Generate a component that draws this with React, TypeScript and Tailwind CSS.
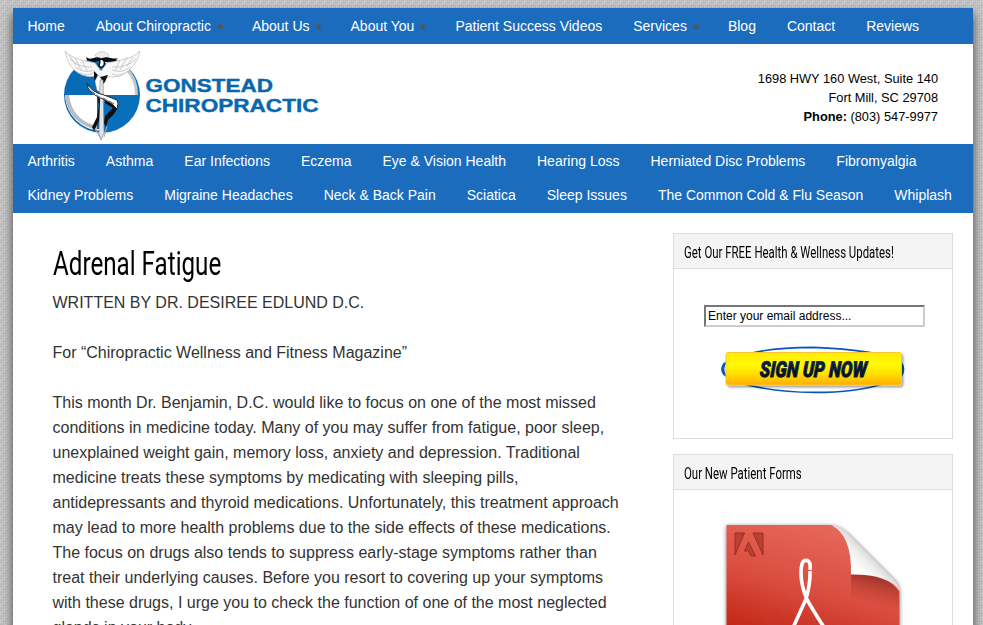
import React from "react";

type NavItem = { label: string; sub?: boolean };

const mainNav: NavItem[] = [
  { label: "Home" },
  { label: "About Chiropractic", sub: true },
  { label: "About Us", sub: true },
  { label: "About You", sub: true },
  { label: "Patient Success Videos" },
  { label: "Services", sub: true },
  { label: "Blog" },
  { label: "Contact" },
  { label: "Reviews" },
];

const topics: string[][] = [
  ["Arthritis", "Asthma", "Ear Infections", "Eczema", "Eye & Vision Health", "Hearing Loss", "Herniated Disc Problems", "Fibromyalgia"],
  ["Kidney Problems", "Migraine Headaches", "Neck & Back Pain", "Sciatica", "Sleep Issues", "The Common Cold & Flu Season", "Whiplash"],
];

const lines = [
  "This month Dr. Benjamin, D.C. would like to focus on one of the most missed",
  "conditions in medicine today. Many of you may suffer from fatigue, poor sleep,",
  "unexplained weight gain, memory loss, anxiety and depression. Traditional",
  "medicine treats these symptoms by medicating with sleeping pills,",
  "antidepressants and thyroid medications. Unfortunately, this treatment approach",
  "may lead to more health problems due to the side effects of these medications.",
  "The focus on drugs also tends to suppress early-stage symptoms rather than",
  "treat their underlying causes. Before you resort to covering up your symptoms",
  "with these drugs, I urge you to check the function of one of the most neglected",
  "glands in your body.",
];

function Texture() {
  return (
    <svg className="absolute inset-0 h-full w-full" aria-hidden="true" shapeRendering="crispEdges">
      <defs>
        <pattern id="weave" width="8" height="8" patternUnits="userSpaceOnUse">
          <rect width="8" height="8" fill="#c9c9c9" />
          <path d="M0 0h4v1H0zM0 2h3v1H0zM5 1h1v4H5zM7 0h1v4H7zM1 4h1v4H1zM3 4h1v4H3zM4 5h4v1H4zM5 7h3v1H5z" fill="#bababa" />
        </pattern>
      </defs>
      <rect width="100%" height="100%" fill="url(#weave)" />
    </svg>
  );
}

function Logo() {
  return (
    <svg width="270" height="100" viewBox="50 44 270 100" className="block" role="img">
      <defs>
        <linearGradient id="rim" x1="0" y1="0" x2="1" y2="1">
          <stop offset="0" stopColor="#0868b2" />
          <stop offset="1" stopColor="#0872bd" />
        </linearGradient>
      </defs>
      <circle cx="102" cy="95" r="38" fill="url(#rim)" />
      <path d="M102 62a33 33 0 0 1 35 33h-35z" fill="#fff" />
      <path d="M128 68q10 10 10 27h-3q0-15-9-24z" fill="#c6c7cb" />
      <path d="M65 95h37v36a37 37 0 0 1-37-36z" fill="#fff" />
      <path d="M65 95h4q3 25 28 31v4Q68 123 65 95z" fill="#babcc2" />
      <path d="M98 63h8v12h-8zM97 92h5v37h-5z" fill="#0869b1" />
      <path d="M65 51q5 6 17 9l13 3 6 8 6-8 14-3q12-2 19-9-3 17-20 25-10 2-15 0l-3 4-5-4q-8 2-15-1Q68 69 65 51z" fill="#f8f8f8" stroke="#b3b3b3" strokeWidth=".6" />
      <path d="M70 59q9 9 22 8m-17 0q9 7 19 3m-14 3q8 4 14-1m42-13q-9 9-24 8m18 0q-8 7-18 3m13 3q-6 4-13 1M69 55l7 10m-1-7 6 12m1-10 5 11m46-14-6 9m0-9-7 13m0-10-5 11" stroke="#b5b5b5" strokeWidth=".65" fill="none" />
      <path d="M95 55q7-7 14 0l-2 3h-10z" fill="#eee" stroke="#aaa" strokeWidth=".5" />
      <path d="M86 57q3 3 8 1 5-2 7 1 4-3 9-1 5 1 8 0l-3 3-9 1-5-2-6 2-8-2z" fill="#080808" />
      <path d="M99 59q7 0 5 6-2 4-5 1l1-5z" fill="#fff" stroke="#0a0a0a" strokeWidth="1.4" />
      <path d="m94 71 6 6 8-2-3 7-4 4 1 4-5-4-3-8z" fill="#111" />
      <path d="M98 75q5 4 5 12l-1 7-5-4-2-9z" fill="#fff" stroke="#aaa" strokeWidth=".4" />
      <path d="M100 80h3l1 53-3 7-2-7z" fill="#e4e4e4" stroke="#85888d" strokeWidth=".65" />
      <path d="m97 95 2 11-2 11-5 10 2 4 5-10 1-22zM105 99l9 5 4 4q-4 7-10 12l-2 7-2-4 1-7 8-8-8-5z" fill="#101010" />
      <path d="M87 83q4 9 17 12l13 5q2 3 0 9-4-6-14-10-16-6-16-16z" fill="#fff" stroke="#282828" strokeWidth="1" />
      <path d="m91 91 4 3m1 1 5 3m2 0 5 3m1 0 5 3" stroke="#777" strokeWidth="1.1" />
      <path d="M95 128q4 8 6 11M107 126l-3 11" stroke="#aaa" strokeWidth="1" />
      <g strokeWidth=".4" className="fill-[#0868ad] stroke-[#0868ad] font-['Liberation_Sans',Arial,sans-serif] text-[18.6px] font-bold">
        <text x="145.5" y="92" textLength="127.5" lengthAdjust="spacingAndGlyphs">GONSTEAD</text>
        <text x="145.5" y="111.5" textLength="173" lengthAdjust="spacingAndGlyphs">CHIROPRACTIC</text>
      </g>
    </svg>
  );
}

function SignUpButton() {
  return (
    <svg width="190" height="52" viewBox="718 344 190 52" className="block" role="img">
      <defs>
        <linearGradient id="gold" x1="0" y1="0" x2="0" y2="1">
          <stop offset="0" stopColor="#fff000" />
          <stop offset=".4" stopColor="#fff800" />
          <stop offset=".65" stopColor="#ffdf00" />
          <stop offset="1" stopColor="#ffae00" />
        </linearGradient>
        <linearGradient id="ink" x1="0" y1="0" x2="0" y2="1">
          <stop offset="0" stopColor="#06285c" />
          <stop offset="1" stopColor="#030616" />
        </linearGradient>
        <filter id="lift" x="-10%" y="-20%" width="120%" height="160%">
          <feDropShadow dx="1.5" dy="2" stdDeviation="1.2" floodOpacity=".35" />
        </filter>
      </defs>
      <path d="M813 347.4q-42 0-66 7-25 6-25 15t27 16q31 7 65 7 43 0 70-9 19-6 18-15-1-10-33-16-25-4-56-5" fill="none" stroke="#0757b8" strokeWidth="1.6" />
      <path d="M725 363q-4 6 0 12M901 363q4 6 0 13" fill="none" stroke="#0757b8" strokeWidth="2.6" />
      <rect x="726" y="352.5" width="175.5" height="32.5" rx="2" fill="url(#gold)" stroke="#ffc430" filter="url(#lift)" />
      <text transform="translate(759.5 377) skewX(-3)" textLength="107" lengthAdjust="spacingAndGlyphs" fill="url(#ink)" stroke="#071734" strokeWidth=".8" className="font-[Roboto,sans-serif] text-[22px] font-black italic">SIGN UP NOW</text>
    </svg>
  );
}

function PdfIcon() {
  return (
    <svg width="200" height="115" viewBox="713 510 200 115" className="block" role="img">
      <defs>
        <linearGradient id="red" gradientUnits="userSpaceOnUse" x1="795" y1="524" x2="760" y2="650">
          <stop offset="0" stopColor="#e56557" />
          <stop offset=".45" stopColor="#da4e40" />
          <stop offset="1" stopColor="#bd1d0c" />
        </linearGradient>
        <linearGradient id="curl" gradientUnits="userSpaceOnUse" x1="853" y1="571" x2="874" y2="550">
          <stop offset=".15" stopColor="#fff" />
          <stop offset=".55" stopColor="#eee" />
          <stop offset=".85" stopColor="#d2d2d2" />
          <stop offset="1" stopColor="#eee" />
        </linearGradient>
        <linearGradient id="fold" gradientUnits="userSpaceOnUse" x1="872" y1="573" x2="864" y2="604">
          <stop offset="0" stopColor="#7b2019" stopOpacity=".75" />
          <stop offset="1" stopColor="#c03527" stopOpacity="0" />
        </linearGradient>
        <filter id="paper" x="-10%" y="-10%" width="120%" height="120%">
          <feDropShadow dx="0" dy="1" stdDeviation="2" floodOpacity=".55" />
        </filter>
      </defs>
      <path d="M726.5 525H831Q841 526 849 534L894 579Q899.5 584 899.5 592V640h-173z" fill="url(#red)" filter="url(#paper)" />
      <path d="M851 574Q888 574 899 592V610H851z" fill="url(#fold)" />
      <path d="M831 525Q842 526 849 534L894 579Q899 584 899.5 591 889 574 851 574.5 852 535 831 525z" fill="url(#curl)" />
      <path d="M735 533h9.5l-9.5 22zM753 533h10v22zM748.5 542l7 14h-4.5l-2.5-5h-4z" fill="#b94032" stroke="#942b23" strokeWidth=".9" />
      <path d="M810 570q1.200-9.500-4-9.800c-4-.2-5 6-5 13 0 9 2.500 17.500 5.500 25.500 6 11 11 18 19 31M810 571q.5 12-4 28l-14 31" fill="none" stroke="#fff" strokeWidth="3.6" />
    </svg>
  );
}

function Widget({ title, className, children }: { title: string; className: string; children: React.ReactNode }) {
  return (
    <section className={`w-[280px] border border-[#ddd] bg-white ${className}`}>
      <h4 className="h-[35px] border-b border-[#ddd] bg-[#f4f4f4] pl-[9.5px] font-[Roboto,sans-serif] text-[17.2px] leading-[37px] text-black">
        <span className="inline-block origin-left scale-x-[0.664] whitespace-nowrap">{title}</span>
      </h4>
      {children}
    </section>
  );
}

export default function App() {
  return (
    <div className="relative h-[625px] w-[983px] overflow-hidden bg-[#c0c0c0] font-['Liberation_Sans',Arial,sans-serif]">
      <Texture />
      <div className="relative mt-2 ml-[13px] h-[700px] w-[960px] bg-white shadow-[0_6px_10px_#444]">
        <nav className="flex h-9 gap-[31px] bg-[#1b6cbd] pl-[14.4px] text-[14px] leading-[36px] whitespace-nowrap text-white">
          {mainNav.map((n) => (
            <a key={n.label} className="flex items-center">
              {n.label}
              {n.sub && (
                <svg width="10" height="6" viewBox="0 0 10 6" className="mt-[2px] w-[10px] overflow-visible">
                  <path d="M8 0h2v2h2v2h-2v2H8V4H6V2h2z" fill="#555" />
                </svg>
              )}
            </a>
          ))}
        </nav>
        <header className="flex h-[100px] justify-between pl-[37px]">
          <Logo />
          <address className="pt-[25px] pr-[35px] text-right text-[12.8px] leading-[19px] text-black not-italic">
            <p>1698 HWY 160 West, Suite 140</p>
            <p>Fort Mill, SC 29708</p>
            <p><b>Phone:</b> (803) 547-9977</p>
          </address>
        </header>
        <nav className="h-[69px] bg-[#1b6cbd] pl-[14.4px] text-[14px] leading-[34px] whitespace-nowrap text-white">
          {topics.map((row, i) => (
            <div key={i} className="flex gap-[31px]">
              {row.map((t) => <a key={t}>{t}</a>)}
            </div>
          ))}
        </nav>
        <div className="flex">
          <article className="w-[660px] pt-[32px] pl-[39.5px] text-[16px] leading-[25px] whitespace-nowrap text-[#333]">
            <h1 className="h-[45px] font-[Roboto,sans-serif] text-[33.5px] leading-[37px] text-black">
              <span className="inline-block origin-left scale-x-[0.722]">Adrenal Fatigue</span>
            </h1>
            <p className="mb-[25px]">WRITTEN BY DR. DESIREE EDLUND D.C.</p>
            <p className="mb-[25px]">For “Chiropractic Wellness and Fitness Magazine”</p>
            <p>
              {lines.map((l) => <span key={l} className="block">{l}</span>)}
            </p>
          </article>
          <aside className="pt-5">
            <Widget title="Get Our FREE Health & Wellness Updates!" className="mb-[15px] h-[206px]">
              <div className="pt-9 pl-[30px]">
                <input defaultValue="Enter your email address..." className="block h-[22px] w-[221px] border-2 border-t-[#767676] border-r-[#ccc] border-b-[#ccc] border-l-[#767676] bg-white px-[2px] text-[12px] text-black" />
              </div>
              <div className="pt-[17px] pl-[44px]"><SignUpButton /></div>
            </Widget>
            <Widget title="Our New Patient Forms" className="h-[300px]">
              <div className="pt-5 pl-[39px]"><PdfIcon /></div>
            </Widget>
          </aside>
        </div>
      </div>
    </div>
  );
}
